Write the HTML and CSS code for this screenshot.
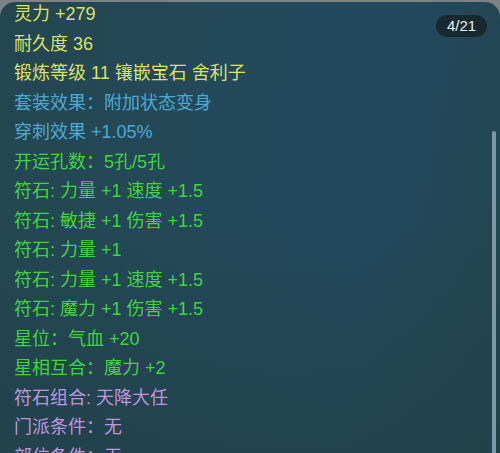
FILE: index.html
```html
<!DOCTYPE html>
<html lang="zh">
<head>
<meta charset="utf-8">
<link rel="stylesheet" href="styles.css">
</head>
<body>
<div class="panel">
  <div class="badge">4/21</div>
  <div class="scrollbar"></div>
  <ul class="lines">
    <li class="yellow">灵力 +279</li>
    <li class="yellow">耐久度 36</li>
    <li class="yellow">锻炼等级 11 镶嵌宝石 舍利子</li>
    <li class="blue">套装效果：附加状态变身</li>
    <li class="blue">穿刺效果 +1.05%</li>
    <li class="green">开运孔数：5孔/5孔</li>
    <li class="green">符石: 力量 +1 速度 +1.5</li>
    <li class="green">符石: 敏捷 +1 伤害 +1.5</li>
    <li class="green">符石: 力量 +1</li>
    <li class="green">符石: 力量 +1 速度 +1.5</li>
    <li class="green">符石: 魔力 +1 伤害 +1.5</li>
    <li class="green">星位：气血 +20</li>
    <li class="green">星相互合：魔力 +2</li>
    <li class="purple">符石组合: 天降大任</li>
    <li class="purple">门派条件：无</li>
    <li class="purple">部位条件：无</li>
  </ul>
</div>
</body>
</html>
```
FILE: styles.css
```css
html, body {
  margin: 0;
  padding: 0;
  height: 453px;
  overflow: hidden;
  background: #7d8283;
}
.panel {
  position: relative;
  margin-top: 2px;
  height: 460px;
  border-radius: 15px 15px 0 0;
  background:
    linear-gradient(180deg, rgba(33,64,72,0) 0%, rgba(33,64,72,0) 45%, rgba(33,64,72,0.7) 100%),
    linear-gradient(100deg, #244650 0%, #24495a 40%, #23495e 70%, #23444f 100%);
  font-family: "Liberation Sans", "Noto Sans CJK SC", sans-serif;
  font-size: 18px;
  overflow: hidden;
}
.lines {
  list-style: none;
  margin: -2px 0 0 0;
  padding: 0 0 0 14px;
}
.lines li {
  line-height: 29.5px;
  height: 29.5px;
  white-space: nowrap;
}
.yellow { color: #dce363; }
.blue { color: #4caad2; }
.green { color: #3fd63d; }
.purple { color: #bf96de; }
.badge {
  position: absolute;
  top: 13px;
  left: 436px;
  width: 51px;
  height: 22px;
  border-radius: 11px;
  background: #182a31;
  color: #e8eef0;
  font-size: 15px;
  line-height: 22px;
  text-align: center;
}
.scrollbar {
  position: absolute;
  top: 129px;
  left: 492px;
  width: 4px;
  height: 340px;
  border-radius: 2px;
  background: #7b98a6;
}
```
